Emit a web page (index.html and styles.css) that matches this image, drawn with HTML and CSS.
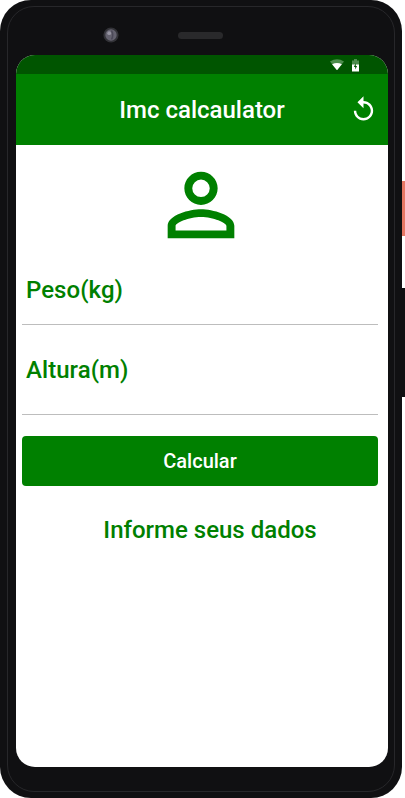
FILE: index.html
```html
<!DOCTYPE html>
<html lang="pt">
<head>
<meta charset="utf-8">
<title>Imc calcaulator</title>
<link rel="stylesheet" href="styles.css">
</head>
<body>
<div class="stage">
  <span class="side-button power"></span>
  <span class="side-button volume"></span>
  <div class="phone">
    <div class="bezel-line"></div>
    <div class="sensors">
      <svg class="camera" viewBox="0 0 16 16"><circle cx="8" cy="8" r="7.6" fill="#323237"/><circle cx="8" cy="8" r="5.7" fill="#64626f"/><path d="M8.5 3.5q2.5 4.500 0 9" fill="none" stroke="#4b4958" stroke-width="1.5"/><circle cx="6.2" cy="6.2" r="1.9" fill="#9694a2"/></svg>
      <span class="speaker"></span>
    </div>
    <main class="screen">
      <div class="status">
        <svg class="wifi" viewBox="0 0 14 12"><path d="M0 2.5Q7-2.2 14 2.5L7 11.3Z" fill="#4d8c4d"/><path d="M2.1 5.2Q7 2.900 11.9 5.2L7 11.3Z" fill="#fff"/></svg>
        <svg class="battery" viewBox="0 0 7 13"><path d="M0 1.5h2V0h3v1.5h2V6H0z" fill="#4d8c4d"/><path d="M0 5.500h7V12.500H0z" fill="#fff"/><path d="M3.8 4v3h1.3L3.2 10.6V8H1.9z" fill="#005500"/></svg>
      </div>
      <header class="appbar">
        <h1 class="title">Imc calcaulator</h1>
        <svg class="replay" viewBox="0 0 24 24"><path fill="#fff" d="M12 5V1L7 6l5 5V7c3.31 0 6 2.69 6 6s-2.69 6-6 6-6-2.69-6-6H4c0 4.42 3.58 8 8 8s8-3.58 8-8-3.58-8-8-8z"/></svg>
      </header>
      <form class="content">
        <svg class="person" viewBox="0 0 24 24"><path fill="#008000" d="M12 5.9a2.1 2.1 0 1 1 0 4.2 2.1 2.1 0 0 1 0-4.2m0 9c2.97 0 6.1 1.46 6.1 2.1v1.1H5.9V17c0-.64 3.13-2.1 6.1-2.1M12 4C9.79 4 8 5.79 8 8s1.79 4 4 4 4-1.79 4-4-1.79-4-4-4zm0 9c-2.67 0-8 1.34-8 4v3h16v-3c0-2.66-5.33-4-8-4z"/></svg>
        <div class="field weight">Peso(kg)</div>
        <div class="field height">Altura(m)</div>
        <button class="calculate" type="button">Calcular</button>
        <p class="info">Informe seus dados</p>
      </form>
    </main>
  </div>
</div>
</body>
</html>
```
FILE: styles.css
```css
* { box-sizing: border-box; }
body { margin: 0; background: #fff; font-family: Roboto, sans-serif; font-weight: 500; overflow: hidden; }
.stage { position: relative; width: 405px; height: 798px; overflow: hidden; }
.side-button { position: absolute; right: 0; width: 6px; }
.power { top: 181px; height: 55px; background: #e77865; }
.volume { top: 288px; height: 109px; background: #101012; }
.phone { position: relative; width: 401.5px; height: 798px; padding: 0 13.5px 31px 16px; border-radius: 31px; background: #101012; }
.bezel-line { position: absolute; top: 6px; left: 7px; right: 6.5px; bottom: 6.5px; border: 1px solid #27272a; border-radius: 27px; }
.sensors { display: flex; align-items: center; height: 55px; padding: 15px 0 0 87px; gap: 59px; }
.camera { width: 16px; height: 16px; }
.speaker { width: 45px; height: 7px; border-radius: 4px; background: #29292b; }
.screen { position: relative; height: 712px; border-radius: 19px; background: #fff; overflow: hidden; }
.status { display: flex; height: 19px; padding: 4px 29px 0 0; justify-content: flex-end; gap: 8.5px; background: #005500; }
.wifi { width: 14px; height: 12px; }
.battery { width: 7px; height: 13px; }
.appbar { display: grid; grid-template-columns: 1fr auto 1fr; align-items: center; height: 71px; padding-right: 10px; padding-left: 10px; background: #008000; }
.title { grid-column: 2; margin: 0; font-size: 24px; line-height: 30px; font-weight: 500; color: #fff; }
.replay { width: 29px; height: 29px; justify-self: end; }
.content { display: flex; flex-direction: column; padding: 9.5px 10px 0 6px; color: #008000; }
.person { width: 100px; height: 100px; margin-left: 129px; flex: none; }
.field { padding-left: 4px; font-size: 24px; line-height: 30px; letter-spacing: 0.05px; border-bottom: 1px solid #bdbdbd; }
.weight { height: 50px; margin-top: 20.5px; }
.height { height: 60px; margin-top: 30px; }
.calculate { height: 50px; margin-top: 21px; padding: 0; border: 0; border-radius: 4px; background: #008000; color: #fff; font: 500 20px/24px Roboto, sans-serif; }
.info { margin: 29px 0 0 20px; text-align: center; font-size: 24px; line-height: 30px; }
```
